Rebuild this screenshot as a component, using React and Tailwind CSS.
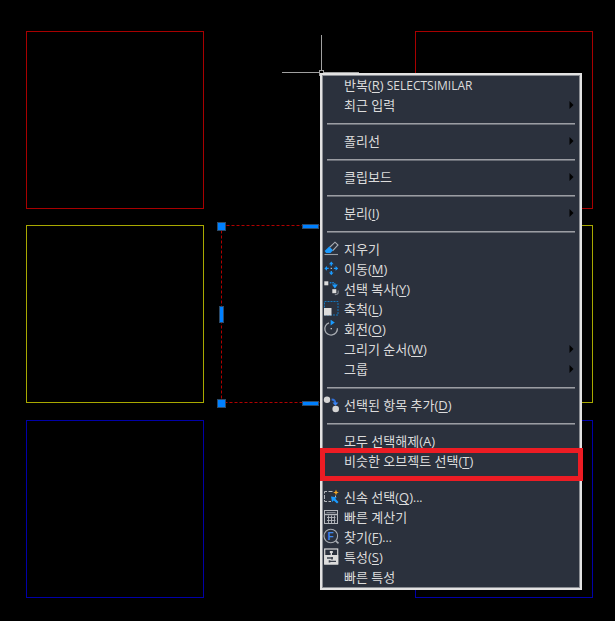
import React from "react";

const EraserIcon = () => (
  <g fill="none">
    <path d="M7.5 8.5 L13 3.2 L16 6 L10.5 11.8" stroke="#a9adb3" strokeWidth="1.1" />
    <path d="M2.6 12 L7.2 7.6 L11 11.2 L8.5 14 H4.2 Z" fill="#1a9bff" />
    <path d="M2.5 15.5 H16" stroke="#9a9ea5" strokeWidth="1.1" />
  </g>
);

const MoveIcon = () => (
  <g fill="#1a9bff">
    <path d="M9.3 2.6 L11.6 5.2 H10 V6.8 H8.6 V5.2 H7 Z" />
    <path d="M9.3 16.2 L11.6 13.6 H10 V12 H8.6 V13.6 H7 Z" />
    <path d="M2.4 9.4 L5 7.1 V8.7 H6.7 V10.1 H5 V11.7 Z" />
    <path d="M16.2 9.4 L13.6 7.1 V8.7 H11.9 V10.1 H13.6 V11.7 Z" />
    <rect x="8.7" y="8.8" width="1.2" height="1.2" fill="#c8cacd" />
  </g>
);

const CopyIcon = () => (
  <g>
    <rect x="2.3" y="2.3" width="4" height="4" fill="#dcdcdc" />
    <path d="M7.8 3.7 H11.5 Q13 3.7 13 6" fill="none" stroke="#1a7fd0" strokeWidth="1.4" strokeDasharray="1.6 0.8" />
    <path d="M10 5.6 H15.8 L12.9 9.4 Z" fill="#1a9bff" />
    <rect x="10.3" y="10.2" width="4" height="4" fill="#dcdcdc" />
    <path d="M16.2 11.4 V13.5 Q16.2 15.6 12.8 15.6" fill="none" stroke="#7d828b" strokeWidth="1.2" />
  </g>
);

const ScaleIcon = () => (
  <g>
    <rect x="2.5" y="2.5" width="13.5" height="13.5" fill="none" stroke="#1577bd" strokeDasharray="2 1" />
    <rect x="2" y="9" width="7.5" height="7.5" fill="#dcdcdc" />
  </g>
);

const RotateIcon = () => (
  <g>
    <path d="M7 3.8 A6.3 6.3 0 1 0 15.4 9.3" fill="none" stroke="#a9adb3" strokeWidth="1.3" />
    <path d="M8.6 0.8 L12.8 3.6 L8.6 6.6 Z" fill="#1a9bff" />
    <rect x="8.6" y="9" width="1.3" height="1.3" fill="#c8cacd" />
  </g>
);

const AddSelectedIcon = () => (
  <g>
    <circle cx="5" cy="4.7" r="3.2" fill="#d5d5d5" />
    <circle cx="13.7" cy="14" r="3.3" fill="#d5d5d5" />
    <path d="M9.6 4.4 Q13.3 4.4 13.3 8.4" fill="none" stroke="#2f6fd6" strokeWidth="2" />
    <path d="M10.4 7.6 H16.4 L13.4 10.8 Z" fill="#3b86f5" />
  </g>
);

const QuickSelectIcon = () => (
  <g>
    <path d="M2.5 6.5 V4.5 H5 M6.5 4.5 H10.5 M2.5 8 V12 M2.5 13 V14.5 H5 M6.5 14.5 H9 M13.5 8.5 V10.5" fill="none" stroke="#b5b8bd" />
    <path d="M14 2.6 L14.8 4.7 L16.8 5.4 L14.8 6.2 L14 8.2 L13.2 6.2 L11.2 5.4 L13.2 4.7 Z" fill="#f5a623" />
    <path d="M9 9.6 L14.8 10.2 L13.3 11.8 L16.5 15 L15 16.5 L11.8 13.4 L10 15 Z" fill="#1a9bff" />
  </g>
);

const CalculatorIcon = () => (
  <g fill="none" stroke="#b5b8bd">
    <rect x="2.5" y="3.5" width="13" height="13" />
    <path d="M3 7.5 H15.5" strokeWidth="1.4" />
    <path d="M4.5 5.5 H13.5" stroke="#7d828b" />
    <path d="M5 10.5 H13.5 M5 13.5 H13.5 M6.5 8.5 V16 M9.5 8.5 V16 M12.5 8.5 V16" strokeWidth="0.9" />
  </g>
);

const FindIcon = () => (
  <g>
    <circle cx="8.8" cy="9" r="6.8" fill="none" stroke="#a9adb3" strokeWidth="1.1" />
    <path d="M13.8 13.8 L16.5 16.4" stroke="#a9adb3" strokeWidth="1.6" />
    <text x="8.9" y="12.5" textAnchor="middle" fill="#3f86ee" fontSize="10" fontWeight="700" fontFamily="Liberation Sans, sans-serif">F</text>
  </g>
);

const PropertiesIcon = () => (
  <g>
    <rect x="2.7" y="2" width="13" height="15" fill="#2b313d" stroke="#d8d8d8" strokeWidth="1.2" />
    <path d="M7.8 4 H10.8 V6 H10 V8 H8.6 V6 H7.8 Z" fill="#dcdcdc" />
    <rect x="2.2" y="8" width="14" height="9.4" fill="#dcdcdc" />
    <path d="M5 11 H11 M8 14.4 H14" stroke="#3b414c" strokeWidth="1.3" />
    <path d="M10 10 V12.4 M7.5 13.2 V15.6" stroke="#3b414c" strokeWidth="1.6" />
  </g>
);

const menuGroups = [
  [
    { label: "반복", hotkey: "R", after: " SELECTSIMILAR" },
    { label: "최근 입력", submenu: true },
  ],
  [{ label: "폴리선", submenu: true }],
  [{ label: "클립보드", submenu: true }],
  [{ label: "분리", hotkey: "I", submenu: true }],
  [
    { label: "지우기", icon: EraserIcon },
    { label: "이동", hotkey: "M", icon: MoveIcon },
    { label: "선택 복사", hotkey: "Y", icon: CopyIcon },
    { label: "축척", hotkey: "L", icon: ScaleIcon },
    { label: "회전", hotkey: "O", icon: RotateIcon },
    { label: "그리기 순서", hotkey: "W", submenu: true },
    { label: "그룹", submenu: true },
  ],
  [{ label: "선택된 항목 추가", hotkey: "D", icon: AddSelectedIcon }],
  [
    { label: "모두 선택해제", hotkey: "A" },
    { label: "비슷한 오브젝트 선택", hotkey: "T", highlighted: true },
  ],
  [
    { label: "신속 선택", hotkey: "Q", after: "...", icon: QuickSelectIcon },
    { label: "빠른 계산기", icon: CalculatorIcon },
    { label: "찾기", hotkey: "F", after: "...", icon: FindIcon },
    { label: "특성", hotkey: "S", icon: PropertiesIcon },
    { label: "빠른 특성" },
  ],
];

const squares = [
  { x: 26.5, y: 31.5, color: "#a80000" },
  { x: 415.5, y: 31.5, color: "#a80000" },
  { x: 26.5, y: 225.5, color: "#a8a800" },
  { x: 415.5, y: 225.5, color: "#a8a800" },
  { x: 26.5, y: 420.5, color: "#0000a8" },
  { x: 415.5, y: 420.5, color: "#0000a8" },
];

const grips = [
  { x: 217.5, y: 222.5, w: 8, h: 8 },
  { x: 217.5, y: 399.5, w: 8, h: 8 },
  { x: 219.5, y: 306.5, w: 4, h: 16 },
  { x: 302.5, y: 224.5, w: 16, h: 4 },
  { x: 302.5, y: 401.5, w: 16, h: 4 },
];

const Drawing = () => (
  <svg className="block h-screen w-full" aria-hidden="true">
    {squares.map((s) => (
      <rect key={`${s.x}-${s.y}`} x={s.x} y={s.y} width="177" height="177" fill="none" stroke={s.color} />
    ))}
    <rect x="221.5" y="225.5" width="177" height="177" fill="none" stroke="#b00000" strokeDasharray="3 2" />
    {grips.map((g) => (
      <rect key={`${g.x}-${g.y}`} x={g.x} y={g.y} width={g.w} height={g.h} fill="#0080ff" stroke="#2c4a68" />
    ))}
    <path d="M321.5 35 V70 M282 72.5 H319 M324 72.5 H359" stroke="#a0a0a0" />
    <rect x="319.5" y="70.5" width="4" height="5" fill="none" stroke="#a0a0a0" />
  </svg>
);

const MenuItem = ({ item }) => {
  const Icon = item.icon;
  return (
    <li className="relative" role="none">
      <button type="button" role="menuitem" className="flex h-5 w-full items-center gap-0.5 pr-1.5 text-left whitespace-pre hover:bg-[#3d4756]">
        <svg className="h-5 w-5 shrink-0" viewBox="0 0 20 20" aria-hidden="true">
          {Icon && <Icon />}
        </svg>
        <span className="flex-1">
          {item.label}
          {item.hotkey && (
            <>
              (<u className="underline-offset-2">{item.hotkey}</u>)
            </>
          )}
          {item.after && <span className="text-xs">{item.after}</span>}
        </span>
        {item.submenu && (
          <svg className="h-2 w-[5px]" viewBox="0 0 5 8" aria-hidden="true">
            <path d="M0.5 0 L4.5 4 L0.5 8 Z" fill="#000" />
          </svg>
        )}
      </button>
      {item.highlighted && (
        <div className="pointer-events-none absolute -top-[3px] -right-[3px] -left-0.5 z-10 h-[33px] border-5 border-[#ed1c24]"></div>
      )}
    </li>
  );
};

const ContextMenu = () => (
  <div
    role="menu"
    className="absolute top-[73px] left-[320px] w-[262px] border-2 border-[#e2e2e2] bg-[#2b313d] pb-px text-[13px] leading-5 text-[#dcdcdc] inset-shadow-[0_0_0_1px_#8b8e94]"
  >
    {menuGroups.map((group, i) => (
      <div key={i} role="group">
        {i > 0 && (
          <div className="mx-[5px] pt-2 pb-1.5">
            <div className="h-0.5 border-t border-[#9b9da3] bg-[#686c75]"></div>
          </div>
        )}
        <ul role="none">
          {group.map((item) => (
            <MenuItem key={item.label} item={item} />
          ))}
        </ul>
      </div>
    ))}
  </div>
);

const App = () => {
  return (
    <main className="relative min-h-screen overflow-hidden bg-black font-['Open_Sans','Noto_Sans_CJK_KR',sans-serif]">
      <Drawing />
      <ContextMenu />
    </main>
  );
};

export default App;
